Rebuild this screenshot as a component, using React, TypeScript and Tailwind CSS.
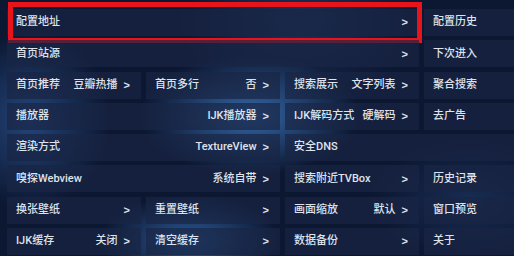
import React from "react";

type Cell = {
  label: string;
  value?: string;
  arrow?: boolean;
  span?: string;
  focused?: boolean;
};

const rows: Cell[][] = [
  [
    { label: "配置地址", arrow: true, span: "col-span-3", focused: true },
    { label: "配置历史" },
  ],
  [
    { label: "首页站源", arrow: true, span: "col-span-3" },
    { label: "下次进入" },
  ],
  [
    { label: "首页推荐", value: "豆瓣热播", arrow: true },
    { label: "首页多行", value: "否", arrow: true },
    { label: "搜索展示", value: "文字列表", arrow: true },
    { label: "聚合搜索" },
  ],
  [
    { label: "播放器", value: "IJK播放器", arrow: true, span: "col-span-2" },
    { label: "IJK解码方式", value: "硬解码", arrow: true },
    { label: "去广告" },
  ],
  [
    { label: "渲染方式", value: "TextureView", arrow: true, span: "col-span-2" },
    { label: "安全DNS", span: "col-span-2" },
  ],
  [
    { label: "嗅探Webview", value: "系统自带", arrow: true, span: "col-span-2" },
    { label: "搜索附近TVBox", arrow: true },
    { label: "历史记录" },
  ],
  [
    { label: "换张壁纸", arrow: true },
    { label: "重置壁纸", arrow: true },
    { label: "画面缩放", value: "默认", arrow: true },
    { label: "窗口预览" },
  ],
  [
    { label: "IJK缓存", value: "关闭", arrow: true },
    { label: "清空缓存", arrow: true },
    { label: "数据备份", arrow: true },
    { label: "关于" },
  ],
];

function Item({ cell }: { cell: Cell }) {
  return (
    <div
      className={`relative flex items-center justify-between pl-[9px] pr-[11px] bg-[#1a2545]/70 ${cell.span ?? ""}`}
    >
      <span>{cell.label}</span>
      {(cell.value || cell.arrow) && (
        <span className="flex items-center gap-[6px]">
          {cell.value && <span>{cell.value}</span>}
          {cell.arrow && <span className="font-['Liberation_Sans',sans-serif] font-bold text-[11px]">&gt;</span>}
        </span>
      )}
      {cell.focused && (
        <div className="absolute top-[-7px] bottom-[-7px] left-[1px] right-[-3px] border-[5px] border-[#e8141c]" />
      )}
    </div>
  );
}

export default function App() {
  return (
    <div className="relative w-[514px] h-[256px] overflow-hidden bg-[#0c1731] bg-[radial-gradient(ellipse_110px_60px_at_250px_115px,#3569a8_0%,transparent_100%),radial-gradient(ellipse_90px_45px_at_190px_240px,#2b5a96_0%,transparent_100%),radial-gradient(ellipse_80px_90px_at_30px_120px,#23467a_0%,transparent_100%),radial-gradient(ellipse_120px_80px_at_300px_20px,#1b3158_0%,transparent_100%),radial-gradient(ellipse_100px_60px_at_470px_200px,#182c52_0%,transparent_100%)] font-['Roboto','Noto_Sans_CJK_SC',sans-serif] text-[11px] font-medium text-[#dfe3ec]">
      <div className="grid grid-cols-[134px_134px_134px_134px] auto-rows-[27px] gap-x-[5px] gap-y-[4.3px] pl-[7px] pt-[9px] w-[560px]">
        {rows.map((row, i) =>
          row.map((cell, j) => <Item key={`${i}-${j}`} cell={cell} />)
        )}
      </div>
    </div>
  );
}
